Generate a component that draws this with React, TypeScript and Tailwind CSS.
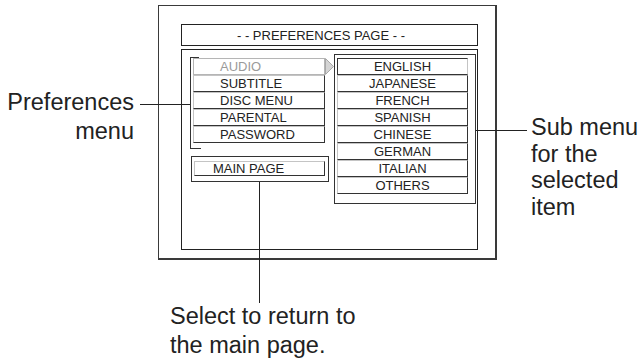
import React from "react";

const leftItems = ["AUDIO", "SUBTITLE", "DISC MENU", "PARENTAL", "PASSWORD"];
const subItems = ["ENGLISH", "JAPANESE", "FRENCH", "SPANISH", "CHINESE", "GERMAN", "ITALIAN", "OTHERS"];

export default function App() {
  return (
    <div
      className="relative w-[642px] h-[358px] bg-white overflow-hidden text-[#222]"
      style={{ fontFamily: '"Liberation Sans", Arial, sans-serif' }}
    >
      {/* Outer frame */}
      <div className="mt-[5px] ml-[158px] w-[339px] h-[255px] border-l border-t border-r-2 border-b-2 border-[#3a3a3a] pl-[22px] pt-[18px]">
        {/* Header */}
        <div className="w-[297px] h-[22px] border border-[#222] flex items-center justify-center pr-[17px] text-[13px] leading-[15px]">
          - - PREFERENCES PAGE - -
        </div>
        {/* Inner box */}
        <div className="mt-[3px] w-[297px] h-[201px] border border-[#222] flex items-start pl-[8px] pt-[4px]">
          {/* Left column */}
          <div className="mt-[3px] w-[135px] flex flex-col">
            <div className="relative h-[92px] border-l border-[#333] pl-[2px] pt-[1px]">
              <div className="absolute left-0 top-0 w-[8px] h-px bg-[#333]" />
              <div className="absolute left-0 bottom-0 w-[10px] h-px bg-[#333]" />
              <div className="flex flex-col w-[132px]">
                {leftItems.map((t, i) =>
                  i === 0 ? (
                    <div
                      key={t}
                      className="h-[17px] border border-[#b5b5b5] pl-[26px] text-[13px] leading-[15px] text-[#9a9a9a]"
                    >
                      {t}
                    </div>
                  ) : (
                    <div
                      key={t}
                      className="h-[17px] border border-t-[#c4c4c4] border-l-[#c4c4c4] border-r-[#333] border-b-[#333] pl-[26px] text-[13px] leading-[15px]"
                    >
                      {t}
                    </div>
                  )
                )}
              </div>
            </div>
            {/* Main page box */}
            <div className="mt-[7px] ml-[1px] w-[138px] h-[26px] shrink-0 border border-[#333] pl-[2px] pt-[4px]">
              <div className="w-[131px] h-[15px] border border-t-[#c4c4c4] border-l-[#c4c4c4] border-r-[#333] border-b-[#333] pl-[18px] text-[13px] leading-[13px]">
                MAIN PAGE
              </div>
            </div>
          </div>
          {/* Arrow */}
          <div className="mt-[4px] w-[9px] h-[17px] shrink-0">
            <svg width="9" height="17" viewBox="0 0 9 17">
              <polygon points="0.5,0.5 8.5,8.5 0.5,16.5" fill="#d4d4d4" stroke="#a8a8a8" strokeWidth="1" />
            </svg>
          </div>
          {/* Sub menu box */}
          <div className="w-[142px] h-[150px] shrink-0 border border-[#333] pl-[2px] pt-[3px]">
            <div className="flex flex-col w-[131px]">
              {subItems.map((t, i) =>
                i === 0 ? (
                  <div
                    key={t}
                    className="h-[17px] border border-t-[#333] border-l-[#333] border-r-[#c4c4c4] border-b-[#333] text-center text-[13px] leading-[15px]"
                  >
                    {t}
                  </div>
                ) : (
                  <div
                    key={t}
                    className="h-[17px] border border-t-[#c4c4c4] border-l-[#c4c4c4] border-r-[#333] border-b-[#333] text-center text-[13px] leading-[15px]"
                  >
                    {t}
                  </div>
                )
              )}
            </div>
          </div>
        </div>
      </div>

      {/* Annotation: Preferences menu */}
      <div className="absolute left-0 top-[88px] w-[134px] text-right text-[23.5px] leading-[29px]">
        <div>Preferences</div>
        <div>menu</div>
      </div>
      <div className="absolute left-[140px] top-[104px] w-[50px] h-px bg-[#222]" />

      {/* Annotation: Sub menu */}
      <div className="absolute left-[531px] top-[114px] text-[23.5px] leading-[26.7px] whitespace-nowrap">
        <div>Sub menu</div>
        <div>for the</div>
        <div>selected</div>
        <div>item</div>
      </div>
      <div className="absolute left-[476px] top-[130px] w-[51px] h-px bg-[#222]" />

      {/* Annotation: Main page */}
      <div className="absolute left-[259px] top-[182px] w-px h-[121px] bg-[#222]" />
      <div className="absolute left-[170px] top-[302px] text-[23.5px] leading-[29px] whitespace-nowrap">
        <div>Select to return to</div>
        <div>the main page.</div>
      </div>
    </div>
  );
}
